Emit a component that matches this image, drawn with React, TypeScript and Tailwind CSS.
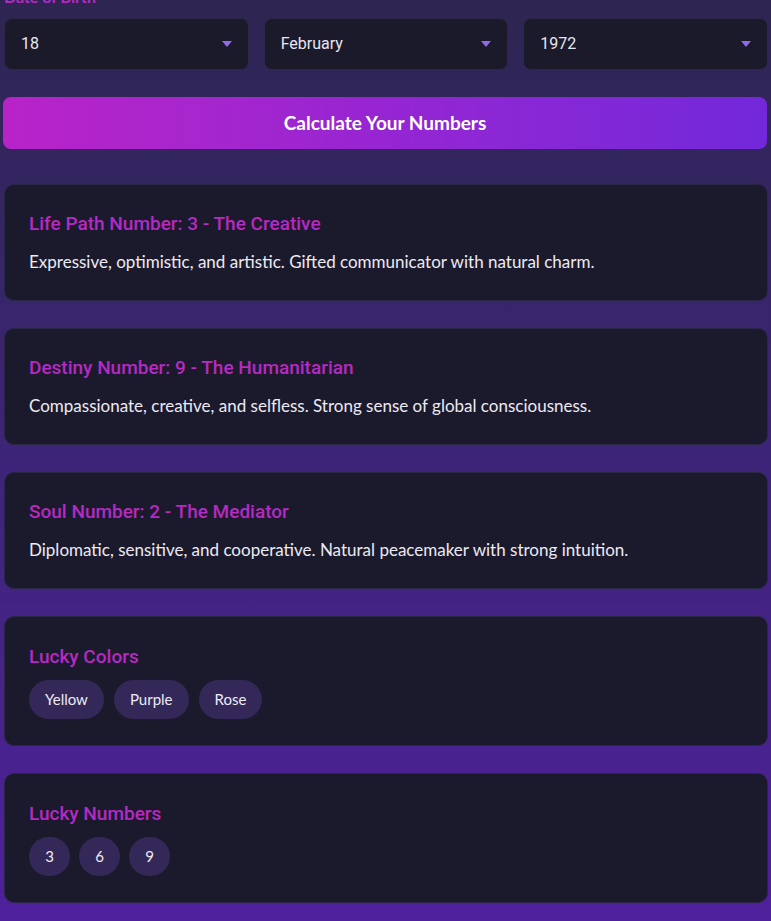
import React from "react";

const cards = [
  {
    title: "Life Path Number: 3 - The Creative",
    text: "Expressive, optimistic, and artistic. Gifted communicator with natural charm.",
  },
  {
    title: "Destiny Number: 9 - The Humanitarian",
    text: "Compassionate, creative, and selfless. Strong sense of global consciousness.",
  },
  {
    title: "Soul Number: 2 - The Mediator",
    text: "Diplomatic, sensitive, and cooperative. Natural peacemaker with strong intuition.",
  },
];

const Select = ({ value }: { value: string }) => (
  <div className="flex h-[52px] flex-1 items-center justify-between rounded-lg border border-[#2c2748] bg-[#1a1a2a] pl-[16px] pr-[16px] text-[16px] text-[#e8e6f0] font-['Roboto',sans-serif]">
    <span>{value}</span>
    <svg width="10" height="6" viewBox="0 0 10 6">
      <path d="M0 0 L10 0 L5 6 Z" fill="#8f6ae8" />
    </svg>
  </div>
);

const Card = ({ children, lucky }: { children: React.ReactNode; lucky?: boolean }) => (
  <div
    className={
      lucky
        ? "rounded-[10px] border border-[#2a2745] bg-[#1b1a2c] px-[24px] pt-[27px] pb-[26px]"
        : "rounded-[10px] border border-[#2a2745] bg-[#1b1a2c] px-[24px] pt-[26px] pb-[25px]"
    }
  >
    {children}
  </div>
);

const Title = ({ children }: { children: React.ReactNode }) => (
  <h3 className="text-[19px] leading-[26px] font-medium text-[#b629c4] font-['Roboto',sans-serif]">
    {children}
  </h3>
);

export default function App() {
  return (
    <div className="min-h-[921px] w-full overflow-hidden bg-gradient-to-b from-[#2e2552] via-[#3d2478] to-[#4f209c] font-['Lato',sans-serif]">
      <div className="-mt-[13px] pl-[4px] pr-[3px] pb-[20px]">
        <label className="block text-[16px] leading-[20px] font-bold text-[#b42bc6]">
          Date of Birth
        </label>
        <div className="mt-[11px] flex gap-[15px]">
          <Select value="18" />
          <Select value="February" />
          <Select value="1972" />
        </div>
        <button className="mt-[27px] h-[52px] w-full -ml-[1px] rounded-lg bg-gradient-to-r from-[#b823c8] via-[#9625d2] to-[#7228da] text-[19px] font-bold text-white">
          Calculate Your Numbers
        </button>
        <div className="mt-[35px] flex flex-col gap-[27px]">
          {cards.map((c) => (
            <Card key={c.title}>
              <Title>{c.title}</Title>
              <p className="mt-[12px] text-[17px] leading-[26px] text-[#eceaf3]">{c.text}</p>
            </Card>
          ))}
          <Card lucky>
            <Title>Lucky Colors</Title>
            <div className="mt-[10px] flex gap-[10px]">
              {["Yellow", "Purple", "Rose"].map((c) => (
                <span
                  key={c}
                  className="flex h-[39px] items-center rounded-full bg-[#342859] px-[16px] text-[15px] text-[#ecebf5]"
                >
                  {c}
                </span>
              ))}
            </div>
          </Card>
          <Card lucky>
            <Title>Lucky Numbers</Title>
            <div className="mt-[10px] flex gap-[9px]">
              {["3", "6", "9"].map((n) => (
                <span
                  key={n}
                  className="flex h-[39px] w-[41px] items-center justify-center rounded-full bg-[#342859] text-[15px] text-[#ecebf5]"
                >
                  {n}
                </span>
              ))}
            </div>
          </Card>
        </div>
      </div>
    </div>
  );
}
